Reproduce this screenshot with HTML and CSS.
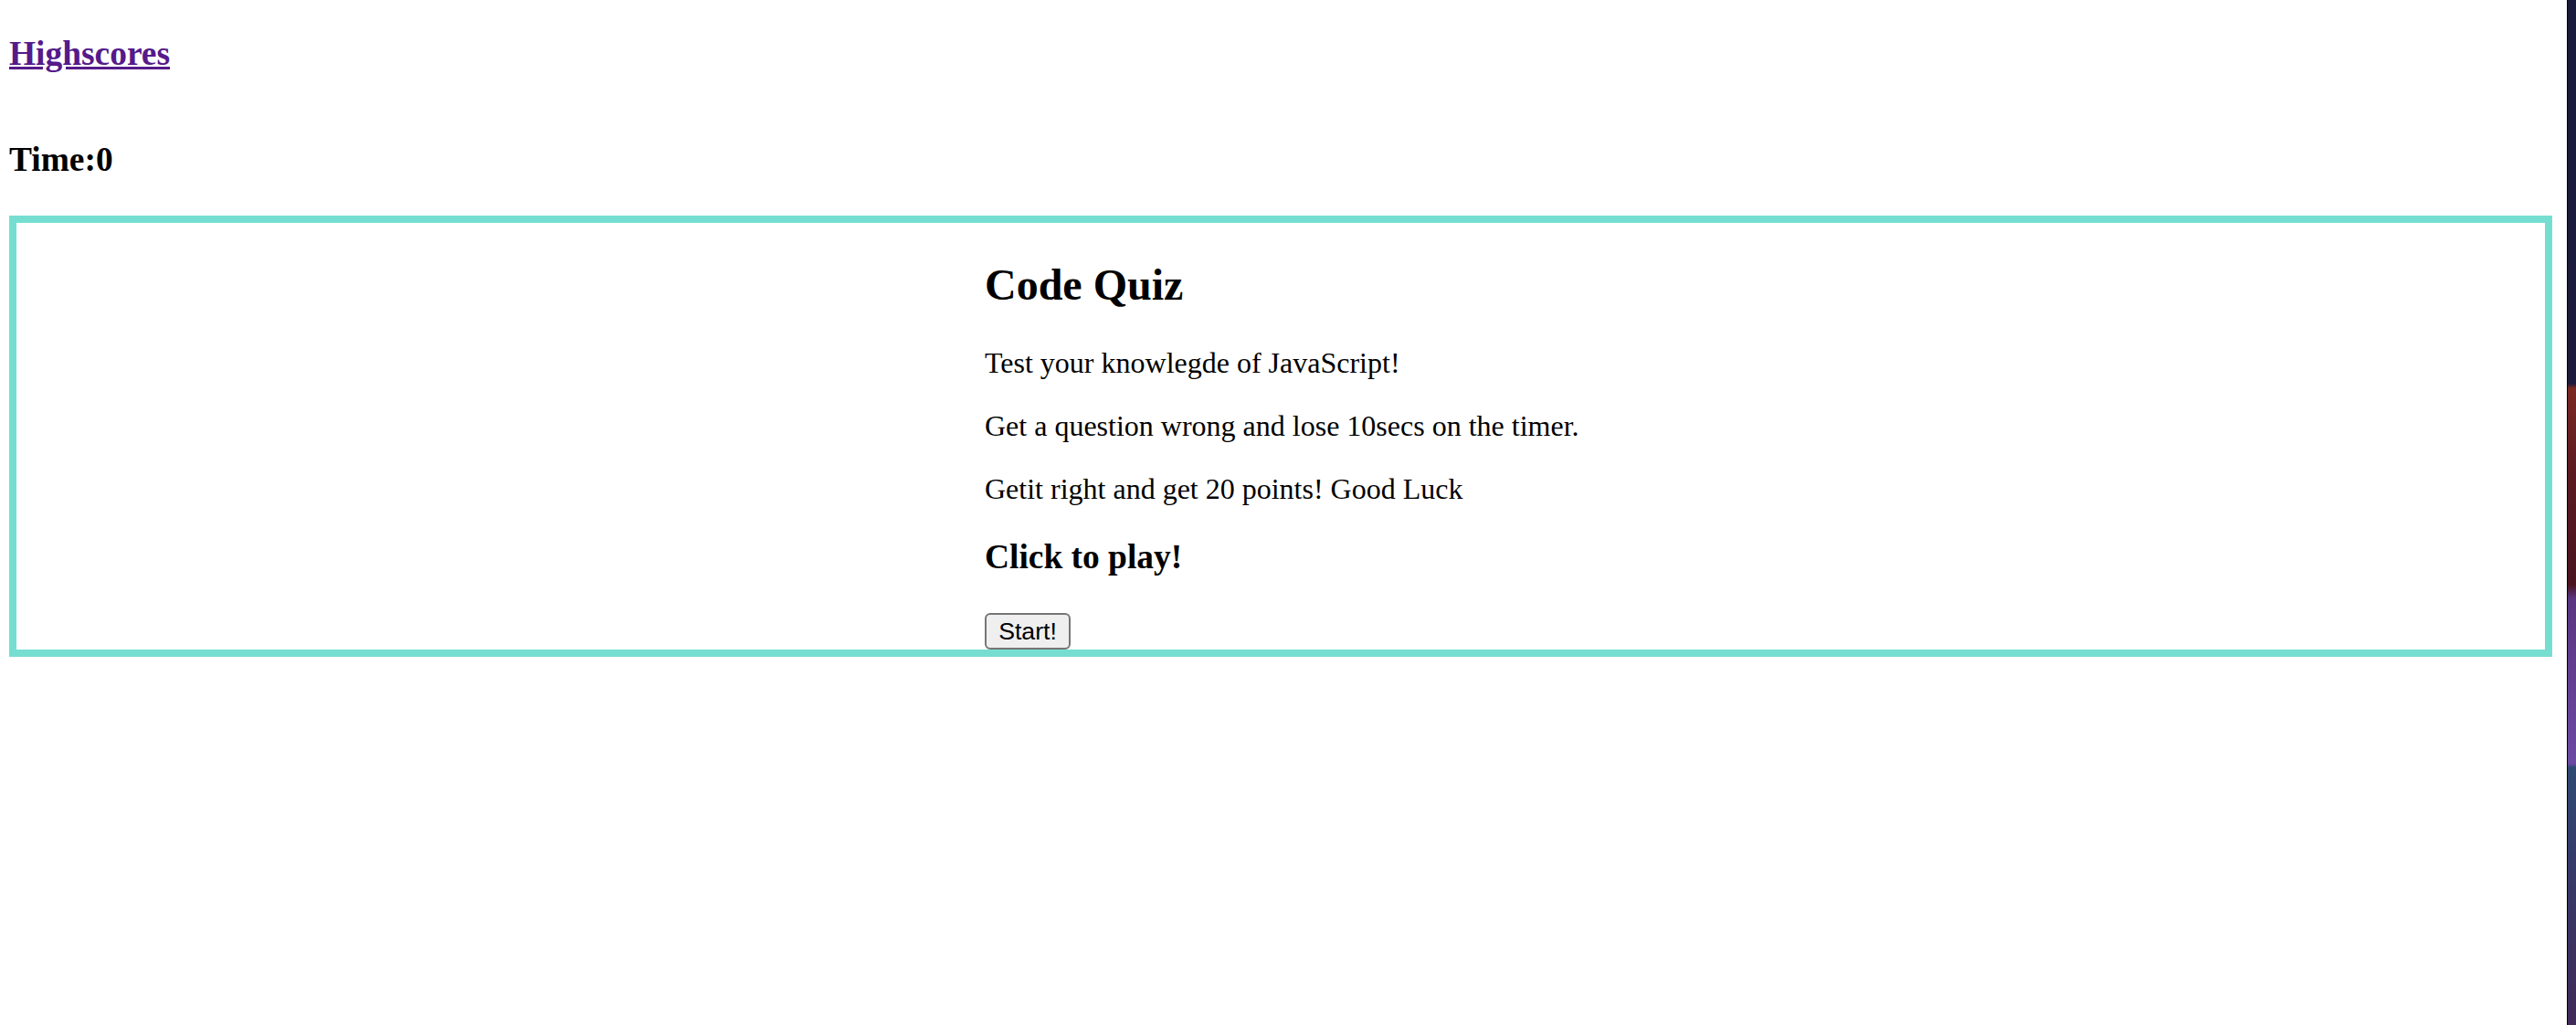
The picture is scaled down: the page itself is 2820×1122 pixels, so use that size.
FILE: index.html
```html
<!DOCTYPE html>
<html lang="en">
<head>
<meta charset="utf-8">
<title>Code Quiz</title>
<link rel="stylesheet" href="styles.css">
</head>
<body>
  <div class="screen">
    <div class="page">
      <header class="topbar">
        <h3 class="nav-title"><a class="nav-link" href="#">Highscores</a></h3>
      </header>
      <h3 class="timer">Time:0</h3>
      <section class="quiz-box">
        <div class="quiz-content">
          <h2 class="quiz-title">Code Quiz</h2>
          <p class="quiz-text">Test your knowlegde of JavaScript!</p>
          <p class="quiz-text">Get a question wrong and lose 10secs on the timer.</p>
          <p class="quiz-text">Getit right and get 20 points! Good Luck</p>
          <h3 class="quiz-cta">Click to play!</h3>
          <button class="start-btn" type="button">Start!</button>
        </div>
      </section>
    </div>
    <div class="desktop-edge"></div>
  </div>
</body>
</html>
```

FILE: styles.css
```css
html, body {
  margin: 0;
  padding: 0;
  background: #ffffff;
}

body {
  font-family: "Liberation Serif", "Times New Roman", serif;
  color: #000000;
  font-size: 32px;
}

.screen {
  display: flex;
  width: 2820px;
  min-height: 1122px;
}

.page {
  width: 2810px;
  box-sizing: border-box;
  padding: 0 16px 0 10px;
  background: #ffffff;
}

.topbar {
  display: flow-root;
}

h3 {
  font-size: 37.44px;
  font-weight: bold;
  margin: 37.44px 0;
}

.nav-title {
  margin: 36.5px 0 37.44px;
}

.nav-link {
  color: #551a8b;
  text-decoration: underline;
}

.timer {
  margin: 36px 0 40px;
}

.quiz-box {
  border: 8px solid #76ded1;
  display: flow-root;
}

.quiz-content {
  padding-left: 1060px;
}

.quiz-title {
  font-size: 48px;
  font-weight: bold;
  margin: 40.5px 0 39.5px;
}

.quiz-text {
  font-size: 32px;
  margin: 32px 0;
}

.quiz-cta {
  margin: 34px 0 40px;
}

.start-btn {
  display: block;
  font-family: "Liberation Sans", Arial, sans-serif;
  font-size: 26.67px;
  color: #000000;
  background: #efefef;
  border: 2px solid #767676;
  border-radius: 6px;
  height: 40px;
  width: 94px;
  padding: 0;
  margin: 0;
  line-height: 36px;
}

.desktop-edge {
  width: 10px;
  border-left: 1px solid #000000;
  box-sizing: border-box;
  background: linear-gradient(to bottom,
    #1b1b3d 0px,
    #1c1b3c 420px,
    #7a2822 425px,
    #5a1a22 520px,
    #4a1420 640px,
    #5a3580 655px,
    #6a48a0 820px,
    #6b4aa2 836px,
    #2f4a72 840px,
    #363a68 950px,
    #402a58 1122px);
}
```
